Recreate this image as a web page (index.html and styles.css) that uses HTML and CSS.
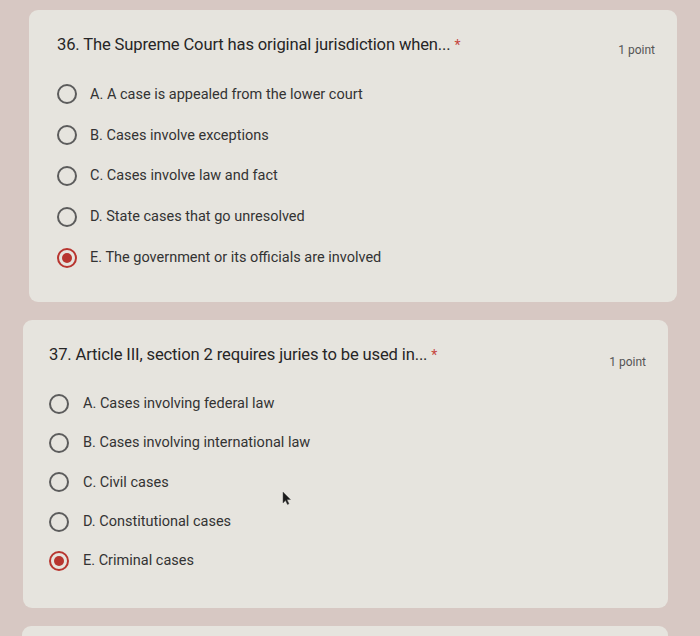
FILE: index.html
```html
<!DOCTYPE html>
<html>
<head>
<meta charset="utf-8">
<link rel="stylesheet" href="styles.css">
</head>
<body>
<div class="page">
  <section class="card card-1">
    <div class="head">
      <h2 class="title">36. The Supreme Court has original jurisdiction when... <span class="req">*</span></h2>
      <span class="points">1 point</span>
    </div>
    <ul class="options">
      <li class="opt"><span class="radio"></span><span>A. A case is appealed from the lower court</span></li>
      <li class="opt"><span class="radio"></span><span>B. Cases involve exceptions</span></li>
      <li class="opt"><span class="radio"></span><span>C. Cases involve law and fact</span></li>
      <li class="opt"><span class="radio"></span><span>D. State cases that go unresolved</span></li>
      <li class="opt"><span class="radio checked"></span><span>E. The government or its officials are involved</span></li>
    </ul>
  </section>
  <section class="card card-2">
    <div class="head">
      <h2 class="title">37. Article III, section 2 requires juries to be used in... <span class="req">*</span></h2>
      <span class="points">1 point</span>
    </div>
    <ul class="options">
      <li class="opt"><span class="radio"></span><span>A. Cases involving federal law</span></li>
      <li class="opt"><span class="radio"></span><span>B. Cases involving international law</span></li>
      <li class="opt"><span class="radio"></span><span>C. Civil cases</span></li>
      <li class="opt"><span class="radio"></span><span>D. Constitutional cases</span></li>
      <li class="opt"><span class="radio checked"></span><span>E. Criminal cases</span></li>
    </ul>
    <svg class="cursor" width="10" height="14" viewBox="0 0 10 14"><path d="M1 1 L1 12 L3.5 9.5 L5.5 13.5 L7 12.8 L5 8.8 L8.5 8.5 Z" fill="#1a1a1a" stroke="#555" stroke-width="0.5"/></svg>
  </section>
  <section class="card card-3"></section>
</div>
</body>
</html>
```

FILE: styles.css
```css
html, body {
  margin: 0;
  padding: 0;
}
body {
  background: #d7c8c3;
  font-family: Roboto, "Noto Sans", Arial, sans-serif;
  color: #2b2b2b;
  width: 700px;
  height: 636px;
  overflow: hidden;
}
.page {
  display: flex;
  flex-direction: column;
  gap: 18px;
  padding-top: 10px;
}
.card {
  background: #e6e4de;
  border-radius: 9px;
  position: relative;
  box-sizing: border-box;
}
.card-1 {
  margin-left: 29px;
  width: 648px;
  height: 292px;
  padding: 23px 22px 0 28px;
}
.card-2 {
  margin-left: 23px;
  width: 645px;
  height: 288px;
  padding: 23px 22px 0 26px;
}
.card-3 {
  margin-left: 22px;
  width: 646px;
  height: 10px;
  border-radius: 9px 9px 0 0;
}
.head {
  display: flex;
  justify-content: space-between;
  align-items: flex-start;
}
.title {
  margin: 0;
  font-size: 16.6px;
  font-weight: 400;
  line-height: 24px;
  color: #262626;
  letter-spacing: -0.15px;
}
.req {
  color: #c5473f;
  font-size: 14px;
}
.points {
  font-size: 12px;
  color: #555;
  padding-top: 9px;
  line-height: 16px;
}
.card-2 .points { padding-top: 11px; }
.options {
  list-style: none;
  margin: 16px 0 0 0;
  padding: 0;
}
.card-2 .options { margin-top: 14px; }
.opt {
  display: flex;
  align-items: center;
  height: 40.8px;
  gap: 13px;
  font-size: 14.5px;
  color: #333;
}
.card-2 .opt { height: 39.3px; gap: 14px; }
.radio {
  width: 20px;
  height: 20px;
  box-sizing: border-box;
  border: 2px solid #5c5c5c;
  border-radius: 50%;
  flex: none;
  display: flex;
  align-items: center;
  justify-content: center;
}
.radio.checked {
  border-color: #b8352f;
}
.radio.checked::after {
  content: "";
  width: 10px;
  height: 10px;
  border-radius: 50%;
  background: #b8352f;
}
.cursor {
  position: absolute;
  left: 259px;
  top: 171px;
}
```
